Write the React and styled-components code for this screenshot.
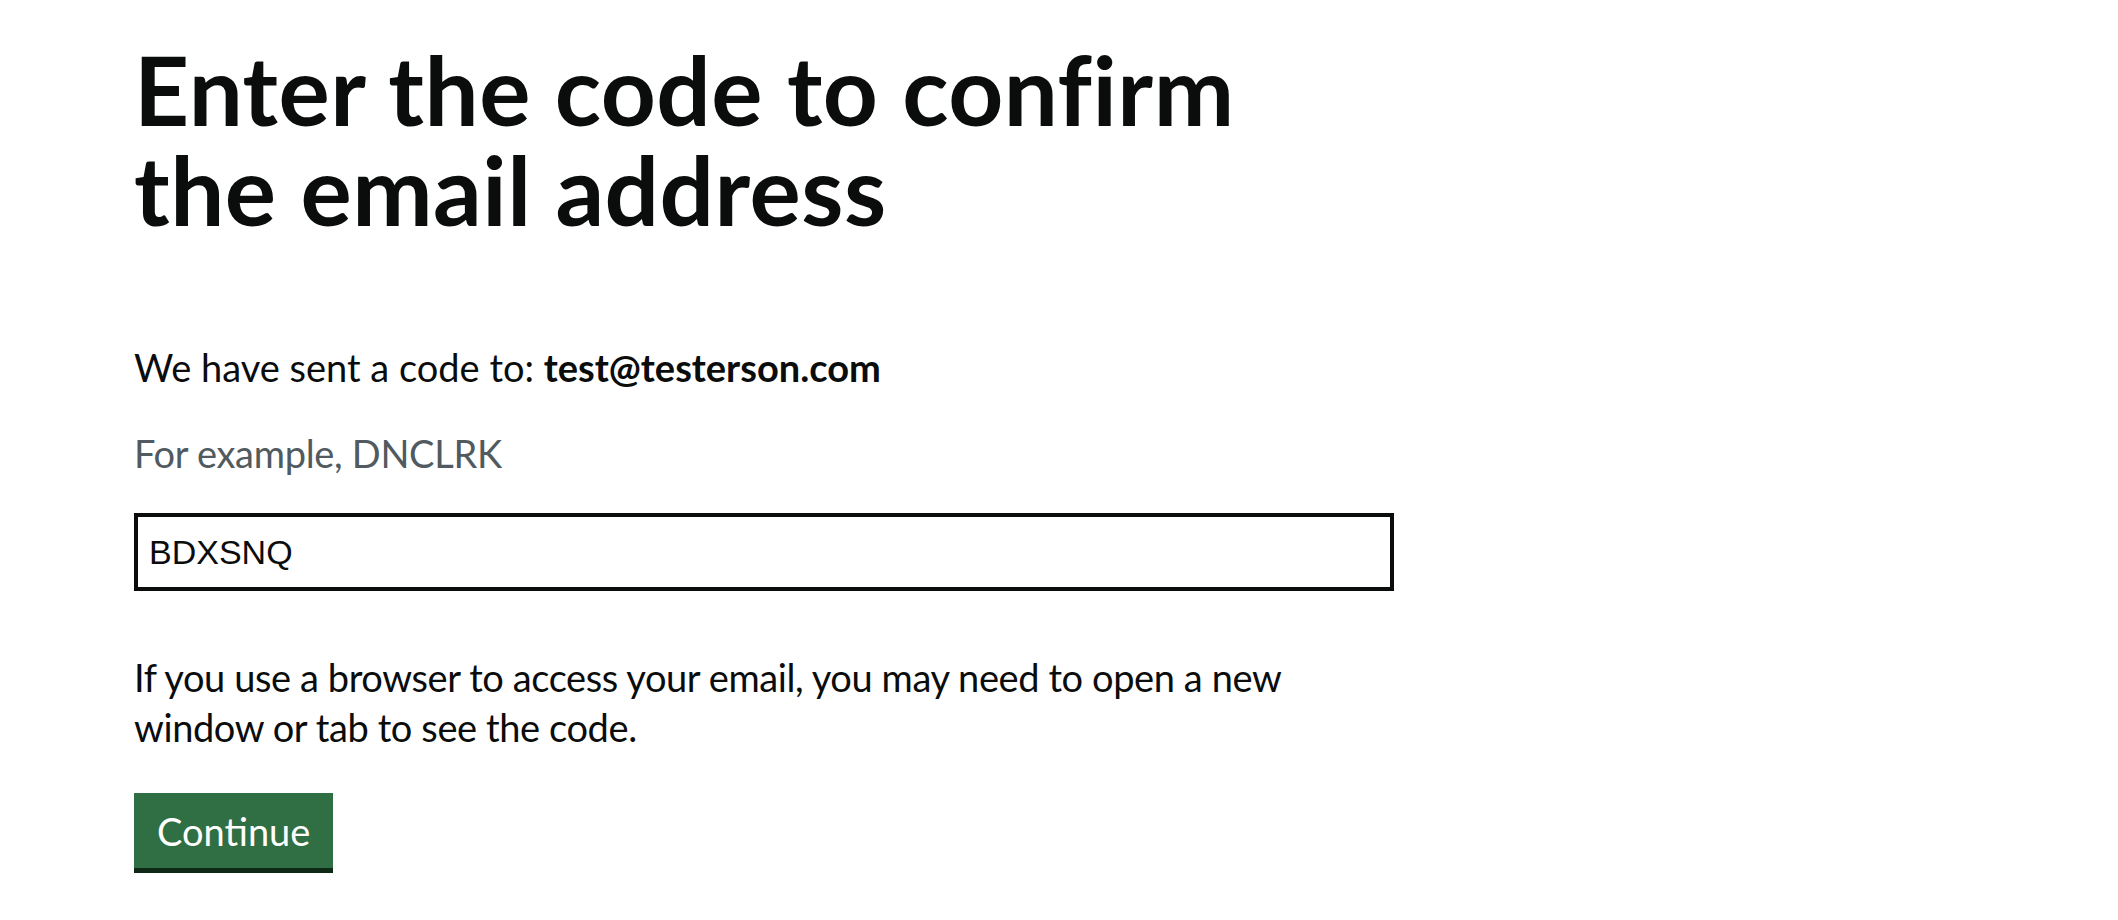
import React from 'react';
import styled, { createGlobalStyle } from 'styled-components';

const GlobalStyle = createGlobalStyle`
    body {
        margin: 0;
        background: #fff;
        font-family: Lato, "Liberation Sans", Arial, sans-serif;
        color: #0b0c0c;
    }
`;

const Page = styled.main`
    padding: 39px 0 40px 134px;
    width: 1260px;
`;

const Heading = styled.h1`
    margin: 0 0 103px;
    font-size: 96px;
    line-height: 100px;
    font-weight: 700;
    letter-spacing: 0.5px;
    max-width: 1200px;
`;

const Body = styled.p`
    margin: 0 0 ${props => props.gap || 0}px;
    font-size: 38px;
    line-height: 50px;
    letter-spacing: ${props => props.tight ? '-0.4px' : '0'};
    max-width: 1180px;
`;

const Hint = styled.div`
    margin-bottom: 35px;
    font-size: 38px;
    line-height: 50px;
    letter-spacing: -0.3px;
    color: #505a5f;
`;

const Input = styled.input`
    display: block;
    box-sizing: border-box;
    width: 1260px;
    height: 78px;
    margin: 0 0 61px;
    padding: 0 11px;
    border: 4px solid #0b0c0c;
    border-radius: 0;
    font-family: "Liberation Sans", Arial, sans-serif;
    font-size: 34px;
    color: #0b0c0c;
    outline: none;
`;

const Button = styled.button`
    display: inline-block;
    box-sizing: border-box;
    height: 75px;
    padding: 0 23px;
    border: none;
    border-radius: 0;
    background: #306f44;
    box-shadow: 0 5px 0 #0e2a17;
    color: #fff;
    font-family: Lato, "Liberation Sans", Arial, sans-serif;
    font-size: 38px;
    line-height: 1;
    cursor: pointer;
`;

const App = () => (
    <Page>
        <GlobalStyle />
        <Heading>Enter the code to confirm the email address</Heading>
        <Body gap={36}>We have sent a code to: <strong>test@testerson.com</strong></Body>
        <Hint>For example, DNCLRK</Hint>
        <Input defaultValue="BDXSNQ" spellCheck={false} />
        <Body gap={41} tight>
            If you use a browser to access your email, you may need to open a new window or tab to see the code.
        </Body>
        <Button>Continue</Button>
    </Page>
);

export default App;
